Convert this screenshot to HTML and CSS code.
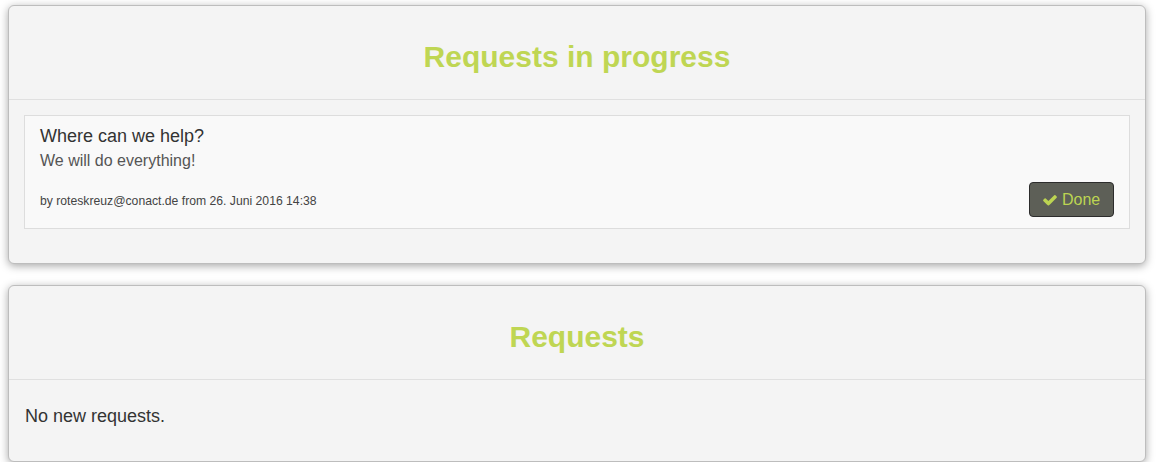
FILE: index.html
```html
<!DOCTYPE html>
<html>
<head>
<meta charset="utf-8">
<link rel="stylesheet" href="styles.css">
</head>
<body>
<div class="page">
  <section class="card">
    <header class="card-head"><h2 class="card-title">Requests in progress</h2></header>
    <div class="card-body card-body-list">
      <div class="item">
        <div class="item-title">Where can we help?</div>
        <div class="item-text">We will do everything!</div>
        <div class="item-foot">
          <span class="item-meta">by roteskreuz@conact.de from 26. Juni 2016 14:38</span>
          <button class="btn-done"><svg class="check" viewBox="0 0 1792 1792" width="16" height="16"><path fill="currentColor" d="M1671 566q0 40-28 68l-724 724-136 136q-28 28-68 28t-68-28l-136-136-362-362q-28-28-28-68t28-68l136-136q28-28 68-28t68 28l294 295 656-657q28-28 68-28t68 28l136 136q28 28 28 68z"/></svg>Done</button>
        </div>
      </div>
    </div>
  </section>
  <section class="card">
    <header class="card-head"><h2 class="card-title">Requests</h2></header>
    <div class="card-body card-body-empty">
      <p class="empty">No new requests.</p>
    </div>
  </section>
</div>
</body>
</html>
```

FILE: styles.css
```css
html, body {
  margin: 0;
  padding: 0;
  background: #ffffff;
}
body {
  font-family: "Liberation Sans", Arial, sans-serif;
  color: #333333;
}
.page {
  padding: 5px 10px 0 8px;
  display: flex;
  flex-direction: column;
  gap: 21px;
}
.card {
  background: #f4f4f4;
  border: 1px solid #bdbdbd;
  border-radius: 6px;
  box-shadow: 0 2px 8px rgba(0,0,0,0.35);
}
.card-head {
  height: 93px;
  border-bottom: 1px solid #e0e0e0;
  display: flex;
  align-items: center;
  justify-content: center;
}
.card-title {
  margin: 0;
  padding-top: 9px;
  font-size: 30px;
  font-weight: bold;
  color: #bfd653;
  line-height: 36px;
}
.card-body-list {
  padding: 15px 15px 34px 15px;
}
.item {
  background: #f9f9f9;
  border: 1px solid #dddddd;
  padding: 8px 15px 11px 15px;
}
.item-title {
  font-size: 18px;
  line-height: 24px;
  color: #333;
}
.item-text {
  font-size: 16px;
  line-height: 26px;
  color: #555;
}
.item-foot {
  margin-top: 8px;
  display: flex;
  align-items: center;
  justify-content: space-between;
}
.item-meta {
  font-size: 12.2px;
  color: #444;
  padding-top: 2px;
}
.btn-done {
  display: flex;
  align-items: center;
  gap: 4px;
  height: 35px;
  width: 85px;
  padding: 0 0 0 12px;
  background: #5d5f57;
  border: 1px solid #2c2c2c;
  border-radius: 4px;
  color: #bcd452;
  font-family: "Liberation Sans", Arial, sans-serif;
  font-size: 16px;
}
.check {
  display: block;
}
.card-body-empty {
  padding: 23px 16px 32px 16px;
}
.empty {
  margin: 0;
  font-size: 18px;
  line-height: 26px;
  color: #333;
}
```
